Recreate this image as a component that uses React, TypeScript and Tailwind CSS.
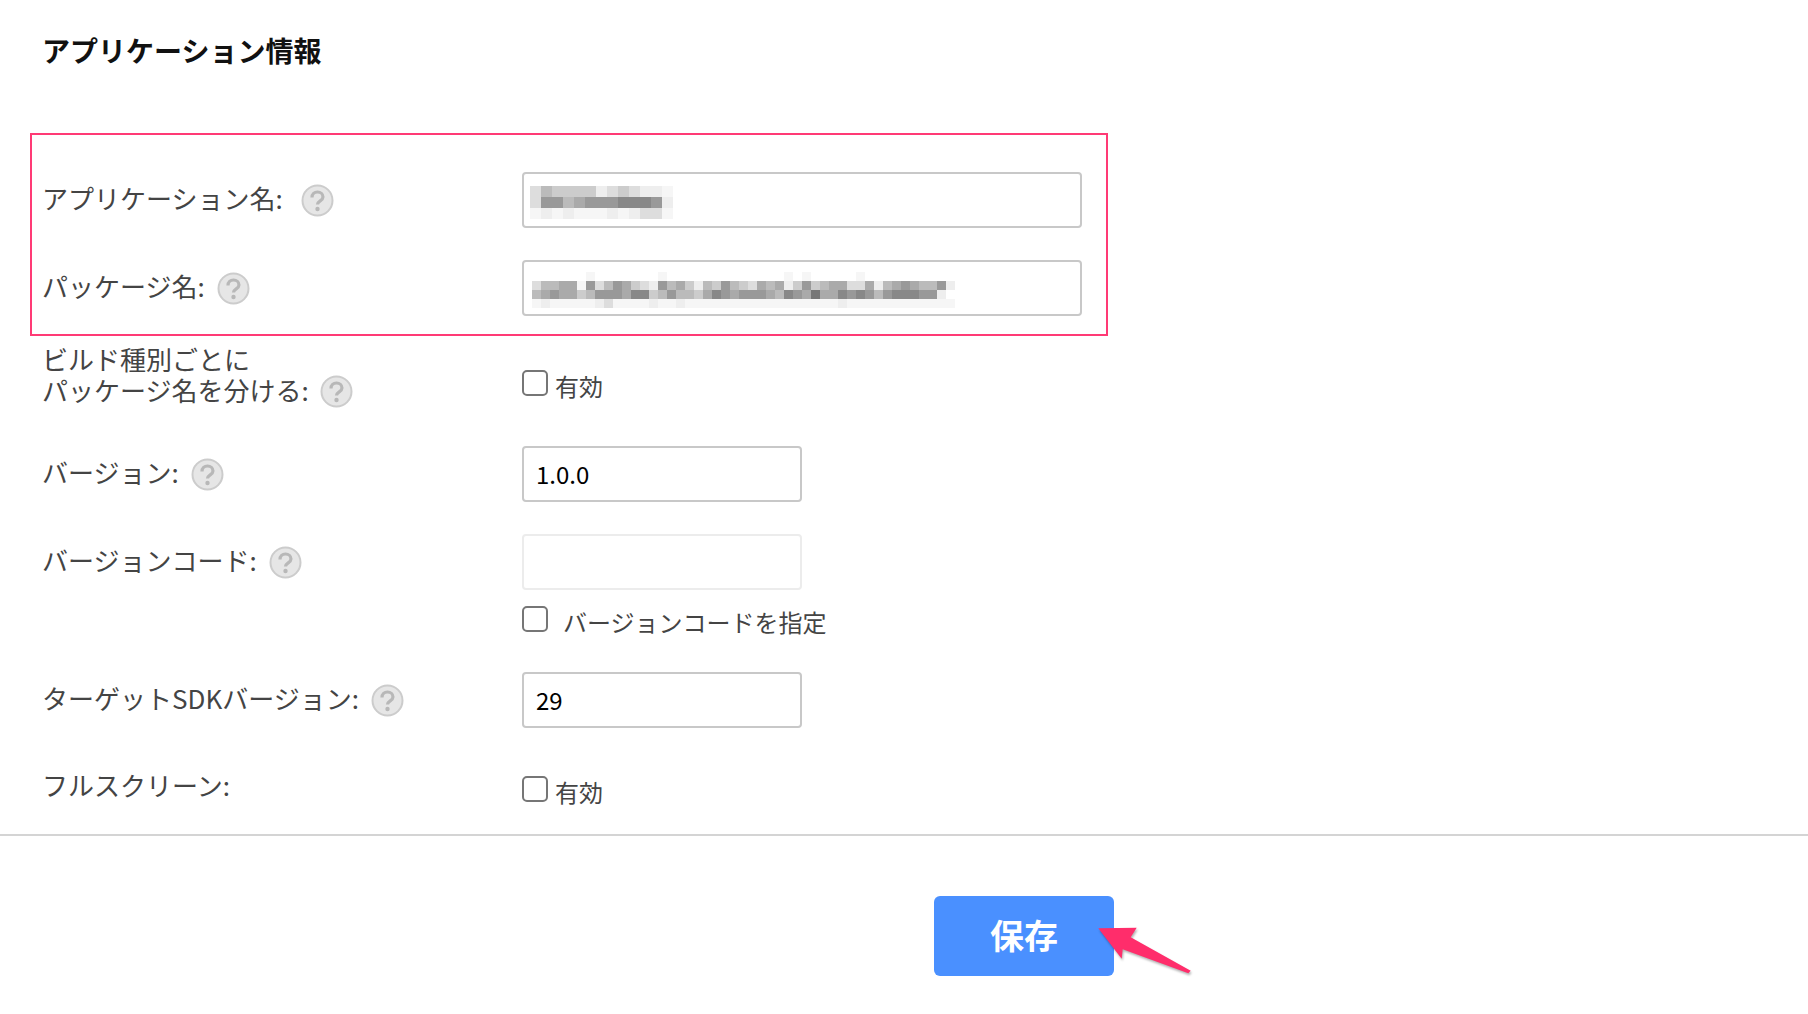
import type { ReactNode } from 'react';

const font = { fontFamily: '"Noto Sans CJK JP", "Noto Sans", sans-serif' };

// pixelated (redacted) field values: one hex digit per cell, gray level, "." is white
const nameCells = [
  'dbccccedcdeef',
  'd99ba9998889e',
  'fefefffefeddf',
];
const packageCells = [
  '......f.......f.............f.f.....f..........',
  'dbbaaf9db9acde9bacebc9bcdabaec9cbaaddaeba9abb9e',
  'ba9aacb999a88cb9bbca89a999ab89a7aa8989b988899e',
  'fefffffedffffeffefffffffffffffffffeffffffffffff',
];

function cellFill(c: string) {
  if (c === '.') return '#ffffff';
  if (c === 'f') return '#f6f6f6';
  return `#${c}${c}${c}`;
}

function Mosaic({ rows, cell, rowH, className }: { rows: string[]; cell: number; rowH: number; className: string }) {
  const cols = Math.max(...rows.map((r) => r.length));
  return (
    <svg width={cols * cell} height={rows.length * rowH} className={`shrink-0 blur-[0.7px] ${className}`} shapeRendering="crispEdges">
      {rows.map((r, y) =>
        r.split('').map((c, x) => (
          <rect key={`${y}-${x}`} x={x * cell} y={y * rowH} width={cell} height={rowH} fill={cellFill(c)} />
        )),
      )}
    </svg>
  );
}

function HelpIcon() {
  return (
    <svg width="33" height="33" viewBox="0 0 33 33" className="shrink-0">
      <circle cx="16.5" cy="16.5" r="15" fill="#e6e6e6" stroke="#cccccc" strokeWidth="2" />
      <path d="M11 13.500c0-3.500 2.500-5.500 5.500-5.500s5.500 2 5.500 5c0 3.800-5.500 3.800-5.500 7.500" fill="none" stroke="#b8b8b8" strokeWidth="3.200" />
      <circle cx="16.500" cy="25" r="2.200" fill="#b8b8b8" />
    </svg>
  );
}

function Label({ children, help = true, gap = 'gap-[12px]' }: { children: ReactNode; help?: boolean; gap?: string }) {
  return (
    <div className={`flex items-center ${gap} text-[26px] leading-[31px] text-[#444]`}>
      <span className={help ? 'pb-[6px]' : 'pb-[9px]'}>{children}</span>
      {help && <HelpIcon />}
    </div>
  );
}

function Check({ label, gap = 'gap-[7px]' }: { label: string; gap?: string }) {
  return (
    <div className={`flex items-center ${gap} text-[24px] leading-[30px] text-[#444]`}>
      <span className="h-[26px] w-[26px] rounded-[5px] border-2 border-[#767676] bg-white" />
      <span className="mt-[6px]">{label}</span>
    </div>
  );
}

function Field({ children, wide, disabled }: { children?: ReactNode; wide?: boolean; disabled?: boolean }) {
  return (
    <div className={`flex h-[56px] items-center rounded-[4px] border-2 bg-white px-[12px] text-[24px] text-black ${wide ? 'w-[560px]' : 'w-[280px]'} ${disabled ? 'border-[#ececec]' : 'border-[#c8c8c8]'}`}>
      {children}
    </div>
  );
}

export default function App() {
  return (
    <div className="relative h-[1014px] w-full overflow-hidden bg-white" style={font}>
      <div className="pl-[42px] pt-[31px]">
        <h1 className="text-[28px] leading-[38px] font-bold text-[#111]">アプリケーション情報</h1>
      </div>

      <div className="mt-[103px] grid grid-cols-[480px_1fr] items-center gap-y-[32px] pl-[42px]">
        <Label gap="gap-[18px]">アプリケーション名:</Label>
        <Field wide>
          <Mosaic rows={nameCells} cell={11} rowH={11} className="-ml-[6px] mt-[4px]" />
        </Field>
        <Label>パッケージ名:</Label>
        <Field wide>
          <Mosaic rows={packageCells} cell={9} rowH={9} className="-ml-[4px] mt-[4px]" />
        </Field>
      </div>

      <div className="mt-[27px] grid grid-cols-[480px_1fr] pl-[42px]">
        <div className="text-[26px] leading-[31px] text-[#444]">
          <div>ビルド種別ごとに</div>
          <div className="flex items-center gap-[11px]">
            <span className="pb-[3px]">パッケージ名を分ける:</span>
            <HelpIcon />
          </div>
        </div>
        <div className="mt-[22px]">
          <Check label="有効" />
        </div>
      </div>

      <div className="mt-[38px] grid grid-cols-[480px_1fr] items-center pl-[42px]">
        <Label>バージョン:</Label>
        <Field>1.0.0</Field>
      </div>

      <div className="mt-[32px] grid grid-cols-[480px_1fr] pl-[42px]">
        <div className="flex h-[56px] items-center">
          <Label>バージョンコード:</Label>
        </div>
        <div className="flex flex-col gap-[11px]">
          <Field disabled />
          <Check label="バージョンコードを指定" gap="gap-[15px]" />
        </div>
      </div>

      <div className="mt-[35px] grid grid-cols-[480px_1fr] items-center pl-[42px]">
        <Label>ターゲットSDKバージョン:</Label>
        <Field>29</Field>
      </div>

      <div className="mt-[41px] grid grid-cols-[480px_1fr] items-center pl-[42px]">
        <Label help={false}>フルスクリーン:</Label>
        <Check label="有効" />
      </div>

      <div className="mt-[25px] h-[2px] bg-[#d4d4d4]" />

      <div className="mt-[60px] flex pl-[934px]">
        <button className="h-[80px] w-[180px] rounded-[6px] bg-[#4a90ff] pb-[4px] text-[34px] font-bold text-white">保存</button>
      </div>

      {/* annotation overlays */}
      <div className="absolute left-[30px] top-[133px] h-[203px] w-[1078px] border-2 border-[#ff3a75]" />
      <svg width="110" height="60" viewBox="0 0 110 60" className="absolute left-[1090px] top-[920px] drop-shadow-[1px_2px_1px_rgba(0,0,0,0.3)]">
        <polygon points="8.300,8.300 46.700,7.700 40.700,17.300 100.700,50.700 98.300,53.300 32.700,29.300 31.700,38.700" fill="#ff2d6b" />
      </svg>
    </div>
  );
}
